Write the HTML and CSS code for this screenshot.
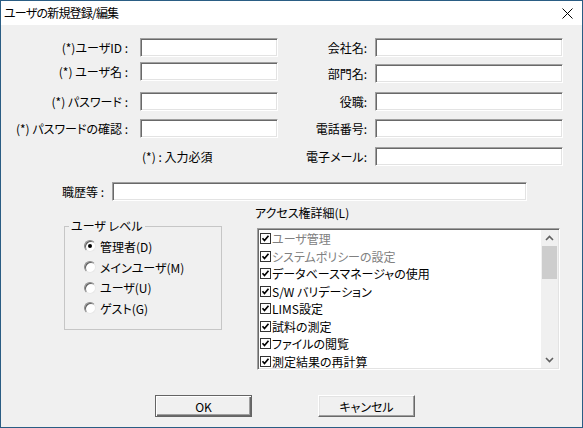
FILE: index.html
```html
<!DOCTYPE html>
<html lang="ja">
<head>
<meta charset="utf-8">
<title>ユーザの新規登録/編集</title>
<link rel="stylesheet" href="styles.css">
</head>
<body>
<div class="window">
  <div class="titlebar">
    <span class="title">ユーザの新規登録/編集</span>
    <svg class="close" width="11" height="11" viewBox="0 0 11 11"><path d="M0.5 0.5 L10.5 10.5 M10.5 0.5 L0.5 10.5" stroke="#000" stroke-width="1" fill="none"/></svg>
  </div>
  <div class="content">
    <div class="top">
      <div class="col col-left">
        <div class="row"><span class="label">(*)ユーザID :</span><span class="field"></span></div>
        <div class="row"><span class="label">(*) ユーザ名 :</span><span class="field"></span></div>
        <div class="row"><span class="label">(*) パスワード :</span><span class="field"></span></div>
        <div class="row"><span class="label">(*) パスワードの確認 :</span><span class="field"></span></div>
        <div class="row note">(*) : 入力必須</div>
      </div>
      <div class="col col-right">
        <div class="row"><span class="label">会社名:</span><span class="field"></span></div>
        <div class="row"><span class="label">部門名:</span><span class="field"></span></div>
        <div class="row"><span class="label">役職:</span><span class="field"></span></div>
        <div class="row"><span class="label">電話番号:</span><span class="field"></span></div>
        <div class="row"><span class="label">電子メール:</span><span class="field"></span></div>
      </div>
    </div>
    <div class="history">
      <span class="label">職歴等 :</span><span class="field"></span>
    </div>
    <div class="bottom">
      <fieldset class="level">
        <legend>ユーザ レベル</legend>
        <div class="radios">
          <div class="radio-row"><span class="radio checked"></span>管理者(D)</div>
          <div class="radio-row"><span class="radio"></span>メインユーザ(M)</div>
          <div class="radio-row"><span class="radio"></span>ユーザ(U)</div>
          <div class="radio-row"><span class="radio"></span>ゲスト(G)</div>
        </div>
      </fieldset>
      <div class="access">
        <div class="access-label">アクセス権詳細(L)</div>
        <div class="list">
          <div class="items">
            <div class="item disabled"><svg class="cb" viewBox="0 0 11 11"><rect x="0.5" y="0.5" width="10" height="10" fill="#fff" stroke="#333"/><path d="M2.5 5.2 L4.5 7.5 L8.5 2.8" stroke="#000" stroke-width="1.7" fill="none"/></svg>ユーザ管理</div>
            <div class="item disabled"><svg class="cb" viewBox="0 0 11 11"><rect x="0.5" y="0.5" width="10" height="10" fill="#fff" stroke="#333"/><path d="M2.5 5.2 L4.5 7.5 L8.5 2.8" stroke="#000" stroke-width="1.7" fill="none"/></svg>システムポリシーの設定</div>
            <div class="item"><svg class="cb" viewBox="0 0 11 11"><rect x="0.5" y="0.5" width="10" height="10" fill="#fff" stroke="#333"/><path d="M2.5 5.2 L4.5 7.5 L8.5 2.8" stroke="#000" stroke-width="1.7" fill="none"/></svg>データベースマネージャの使用</div>
            <div class="item"><svg class="cb" viewBox="0 0 11 11"><rect x="0.5" y="0.5" width="10" height="10" fill="#fff" stroke="#333"/><path d="M2.5 5.2 L4.5 7.5 L8.5 2.8" stroke="#000" stroke-width="1.7" fill="none"/></svg>S/W バリデーション</div>
            <div class="item"><svg class="cb" viewBox="0 0 11 11"><rect x="0.5" y="0.5" width="10" height="10" fill="#fff" stroke="#333"/><path d="M2.5 5.2 L4.5 7.5 L8.5 2.8" stroke="#000" stroke-width="1.7" fill="none"/></svg>LIMS設定</div>
            <div class="item"><svg class="cb" viewBox="0 0 11 11"><rect x="0.5" y="0.5" width="10" height="10" fill="#fff" stroke="#333"/><path d="M2.5 5.2 L4.5 7.5 L8.5 2.8" stroke="#000" stroke-width="1.7" fill="none"/></svg>試料の測定</div>
            <div class="item"><svg class="cb" viewBox="0 0 11 11"><rect x="0.5" y="0.5" width="10" height="10" fill="#fff" stroke="#333"/><path d="M2.5 5.2 L4.5 7.5 L8.5 2.8" stroke="#000" stroke-width="1.7" fill="none"/></svg>ファイルの閲覧</div>
            <div class="item"><svg class="cb" viewBox="0 0 11 11"><rect x="0.5" y="0.5" width="10" height="10" fill="#fff" stroke="#333"/><path d="M2.5 5.2 L4.5 7.5 L8.5 2.8" stroke="#000" stroke-width="1.7" fill="none"/></svg>測定結果の再計算</div>
          </div>
          <div class="scrollbar">
            <div class="arrow"><svg width="9" height="6" viewBox="0 0 9 6"><path d="M1 5 L4.5 1.5 L8 5" stroke="#606060" stroke-width="1.6" fill="none"/></svg></div>
            <div class="thumb"></div>
            <div class="track"></div>
            <div class="arrow"><svg width="9" height="6" viewBox="0 0 9 6"><path d="M1 1 L4.5 4.5 L8 1" stroke="#606060" stroke-width="1.6" fill="none"/></svg></div>
          </div>
        </div>
      </div>
    </div>
    <div class="buttons">
      <button class="btn default">OK</button>
      <button class="btn">キャンセル</button>
    </div>
  </div>
</div>
</body>
</html>
```
FILE: styles.css
```css
* { box-sizing: border-box; }

body {
  margin: 0;
  font-family: "Noto Sans CJK JP", "Noto Sans", sans-serif;
  font-size: 12px;
  font-feature-settings: "palt";
  color: #000;
}

.window {
  width: 583px;
  height: 428px;
  border: 1px solid #2a5d84;
  background: #f0f0f0;
  display: flex;
  flex-direction: column;
}

.titlebar {
  flex: none;
  height: 24px;
  background: #fff;
  display: flex;
  align-items: center;
  justify-content: space-between;
  padding: 0 9px 0 3px;
}

.title { line-height: 16px; letter-spacing: -0.8px; }
.close { display: block; }

.content {
  display: flex;
  flex-direction: column;
}

.top {
  display: flex;
  margin-top: 13px;
}

.col { display: flex; flex-direction: column; }
.col-left { width: 277px; }

.row {
  display: flex;
  align-items: center;
  height: 19px;
  white-space: nowrap;
}

.label { text-align: right; white-space: nowrap; }

.field {
  display: block;
  height: 19px;
  background: #fff;
  border: 1px solid;
  border-color: #a0a0a0 #fff #fff #a0a0a0;
  box-shadow: inset 1px 1px #696969, inset -1px -1px #e3e3e3;
}

.col-left .label { width: 127px; margin-right: 12px; }
.col-left .field { width: 138px; }
.col-left .row:nth-child(2) { margin-top: 5px; }
.col-left .row:nth-child(3) { margin-top: 11px; }
.col-left .row:nth-child(4) { margin-top: 8px; }
.col-left .row:nth-child(5) { margin-top: 9px; }
.note { padding-left: 141px; }

.col-right .label { width: 89px; margin-right: 8px; }
.col-right .field { width: 188px; }
.col-right .row:nth-child(2) { margin-top: 7px; }
.col-right .row:nth-child(3) { margin-top: 9px; }
.col-right .row:nth-child(4) { margin-top: 8px; }
.col-right .row:nth-child(5) { margin-top: 9px; }

.history {
  display: flex;
  align-items: center;
  height: 19px;
  margin-top: 16px;
}
.history .label { width: 103px; margin-right: 8px; }
.history .field { width: 415px; }

.bottom {
  display: flex;
  align-items: flex-start;
  margin-top: 5px;
}

.level {
  margin: 13px 0 0 63px;
  width: 158px;
  height: 111px;
  padding: 0;
  border: 1px solid #c6c6c6;
  min-width: 0;
}

.level legend {
  margin-left: 4px;
  padding: 0 2px;
  line-height: 14px;
}

.radios { padding-top: 3px; }

.radio-row {
  display: flex;
  align-items: center;
  height: 20.7px;
  padding-left: 19px;
  white-space: nowrap;
}

.radio {
  width: 12px;
  height: 12px;
  border-radius: 50%;
  margin-right: 4px;
  background: #fff;
  border: 1px solid;
  border-color: #8a8a8a #e8e8e8 #e8e8e8 #8a8a8a;
  box-shadow: inset 1px 1px #5f5f5f;
  display: flex;
  align-items: center;
  justify-content: center;
}

.radio.checked::after {
  content: "";
  width: 4px;
  height: 4px;
  border-radius: 50%;
  background: #000;
}

.access { margin-left: 33px; }

.access-label {
  line-height: 14px;
  margin-bottom: 8px;
  white-space: nowrap;
}

.list {
  margin-left: 2px;
  width: 303px;
  height: 142px;
  display: flex;
  background: #fff;
  border: 1px solid;
  border-color: #a0a0a0 #fff #fff #a0a0a0;
  box-shadow: inset 1px 1px #696969, inset -1px -1px #e3e3e3;
  padding: 1px;
}

.items {
  flex: 1;
  overflow: hidden;
  padding-left: 1px;
}

.item {
  height: 17.5px;
  display: flex;
  align-items: center;
  white-space: nowrap;
}

.item.disabled { color: #808080; }

.cb {
  width: 11px;
  height: 11px;
  flex: none;
  margin-right: 1px;
}

.scrollbar {
  width: 17px;
  flex: none;
  background: #f0f0f0;
  display: flex;
  flex-direction: column;
}

.arrow {
  height: 16px;
  display: flex;
  align-items: center;
  justify-content: center;
  flex: none;
}

.thumb {
  height: 33px;
  margin: 0 1px;
  background: #cdcdcd;
  flex: none;
}

.track { flex: 1; }

.buttons {
  display: flex;
  gap: 66px;
  margin: 25px 0 0 154px;
}

.btn {
  width: 97px;
  height: 22px;
  padding: 0;
  font: inherit;
  font-feature-settings: "palt";
  color: #000;
  background: #f0f0f0;
  border: 1px solid;
  border-color: #fff #696969 #696969 #fff;
  box-shadow: inset -1px -1px #a0a0a0, inset 1px 1px #e3e3e3;
}

.btn.default {
  border-color: #646464;
  box-shadow: inset 1px 1px #fff, inset -1px -1px #696969, inset -2px -2px #a0a0a0;
}
```
